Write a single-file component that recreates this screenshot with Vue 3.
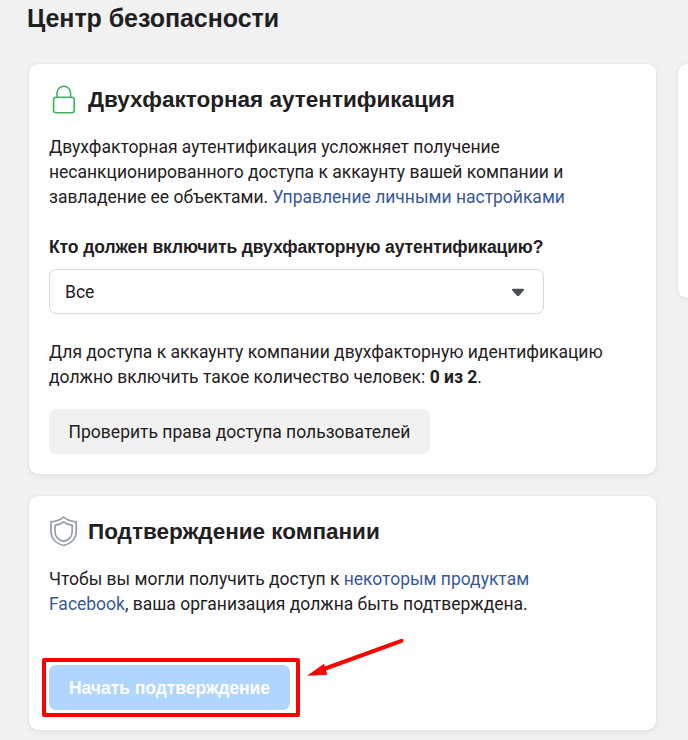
<template>
  <div class="page">
    <h1 class="page-title">Центр безопасности</h1>
    <div class="columns">
      <main class="main-column">
        <section class="card card-auth">
          <header class="card-header">
            <svg class="icon" width="30" height="32" viewBox="0 0 30 32" fill="none" stroke="#3cb65c" stroke-width="1.6">
              <path d="M8 13.300V9a6.800 6.800 0 0 1 13.600 0v4.300" />
              <rect x="4.600" y="13.300" width="20.600" height="15.400" rx="2.400" />
            </svg>
            <h2 class="card-title">Двухфакторная аутентификация</h2>
          </header>
          <p class="text">
            Двухфакторная аутентификация усложняет получение<br />
            несанкционированного доступа к аккаунту вашей компании и<br />
            завладение ее объектами. <a class="link">Управление личными настройками</a>
          </p>
          <label class="field-label">Кто должен включить двухфакторную аутентификацию?</label>
          <button class="select">
            <span>{{ audience }}</span>
            <svg width="14" height="9" viewBox="0 0 14 9">
              <path d="M2 0.8h10c1 0 1.3 1 .7 1.700L8.300 7.600c-.7.8-1.900.8-2.600 0L1.300 2.500C.7 1.800 1 .8 2 .8z" fill="#4b4f59" />
            </svg>
          </button>
          <p class="text status">
            Для доступа к аккаунту компании двухфакторную идентификацию<br />
            должно включить такое количество человек: <b>{{ enabled }} из {{ total }}</b>.
          </p>
          <button class="btn btn-secondary">Проверить права доступа пользователей</button>
        </section>

        <section class="card card-verify">
          <header class="card-header">
            <svg class="icon" width="30" height="32" viewBox="0 0 30 32" fill="none" stroke="#959ca8" stroke-width="1.700" stroke-linejoin="round">
              <path d="M14.600 1C11.500 4 7 5.400 2 5.900V15.500c0 7 5 12.200 12.600 14C22.200 27.700 27.200 22.500 27.200 15.500V5.900C22.200 5.400 17.700 4 14.600 1z" />
              <path d="M14.600 5.800C12 7.900 9.300 8.900 6 9.300V15.500c0 5 3.400 8.500 8.600 9.900C19.800 24 23.200 20.500 23.200 15.500V9.300C19.900 8.900 17.200 7.900 14.600 5.800z" />
            </svg>
            <h2 class="card-title">Подтверждение компании</h2>
          </header>
          <p class="text">
            Чтобы вы могли получить доступ к <a class="link">некоторым продуктам<br />
            Facebook</a>, ваша организация должна быть подтверждена.
          </p>
          <div class="action">
            <button class="btn btn-primary" disabled>Начать подтверждение</button>
            <div class="highlight"></div>
            <svg class="arrow" width="100" height="42" viewBox="0 0 100 42">
              <line x1="94.500" y1="4.800" x2="17" y2="33" stroke="#fe0000" stroke-width="4" stroke-linecap="round" />
              <path d="M0 39.800L17 27.800L20.300 38.800z" fill="#fe0000" />
            </svg>
          </div>
        </section>
      </main>
      <aside class="card side-card"></aside>
    </div>
  </div>
</template>

<script setup>
import { ref } from 'vue'

const audience = ref('Все')
const enabled = ref(0)
const total = ref(2)
</script>

<style>
body {
  margin: 0;
  background: #f1f1f1;
  overflow: hidden;
}
</style>

<style scoped>
.page {
  height: 740px;
  padding: 3px 0 0 29px;
  box-sizing: border-box;
  overflow: hidden;
  color: #1f2022;
  font-family: Roboto, 'Liberation Sans', sans-serif;
  font-size: 17.5px;
  line-height: 25px;
}

.page-title {
  margin: 0 0 31px -2px;
  font-family: 'Liberation Sans', Arial, sans-serif;
  font-size: 25px;
  line-height: 30px;
  letter-spacing: -0.05px;
}

.columns {
  display: flex;
  align-items: flex-start;
  gap: 22px;
}

.main-column {
  width: 627px;
  flex-shrink: 0;
  display: flex;
  flex-direction: column;
  gap: 22px;
}

.card {
  box-sizing: border-box;
  background: #fff;
  border-radius: 9px;
  box-shadow: 0 0 2px rgba(50, 70, 110, 0.12), 0 2px 6px rgba(0, 0, 0, 0.05);
}

.card-auth {
  height: 410px;
  padding: 21px 20px 20px;
}

.card-verify {
  height: 234px;
  padding: 21px 20px 20px;
}

.side-card {
  width: 300px;
  height: 234px;
  flex-shrink: 0;
}

.card-header {
  display: flex;
  align-items: center;
  gap: 9px;
  height: 30px;
  margin-bottom: 20px;
}

.icon {
  flex-shrink: 0;
}

.card-title {
  margin: 0;
  font-family: 'Liberation Sans', Arial, sans-serif;
  font-size: 22.5px;
  line-height: 30px;
  white-space: nowrap;
}

.text {
  margin: 0;
  white-space: nowrap;
  letter-spacing: -0.01px;
}

.link {
  color: #385898;
}

.field-label {
  display: block;
  margin: 25px 0 9px;
  font-family: 'Liberation Sans', Arial, sans-serif;
  font-weight: bold;
  letter-spacing: -0.09px;
  white-space: nowrap;
}

.select {
  display: flex;
  align-items: center;
  justify-content: space-between;
  box-sizing: border-box;
  width: 495px;
  height: 45px;
  padding: 1px 18px 0 15px;
  border: 1px solid #d6d8db;
  border-radius: 7px;
  background: #fff;
  color: inherit;
  font: inherit;
}

.status {
  margin: 26px 0 19px;
}

.btn {
  display: block;
  box-sizing: border-box;
  height: 45px;
  padding: 2px 0 0;
  border: none;
  border-radius: 7px;
  color: inherit;
  font: inherit;
  white-space: nowrap;
}

.btn-secondary {
  width: 381px;
  background: #f1f1f1;
}

.btn-primary {
  width: 241px;
  background: #b0d5ff;
  color: #fff;
  font-family: 'Liberation Sans', Arial, sans-serif;
  font-weight: bold;
  letter-spacing: -0.04px;
}

.action {
  position: relative;
  margin-top: 48px;
}

.highlight {
  position: absolute;
  top: -7px;
  left: -7px;
  box-sizing: border-box;
  width: 258px;
  height: 59px;
  border: 4px solid #fe0000;
  border-radius: 2px;
}

.arrow {
  position: absolute;
  top: -29px;
  left: 258px;
}
</style>
